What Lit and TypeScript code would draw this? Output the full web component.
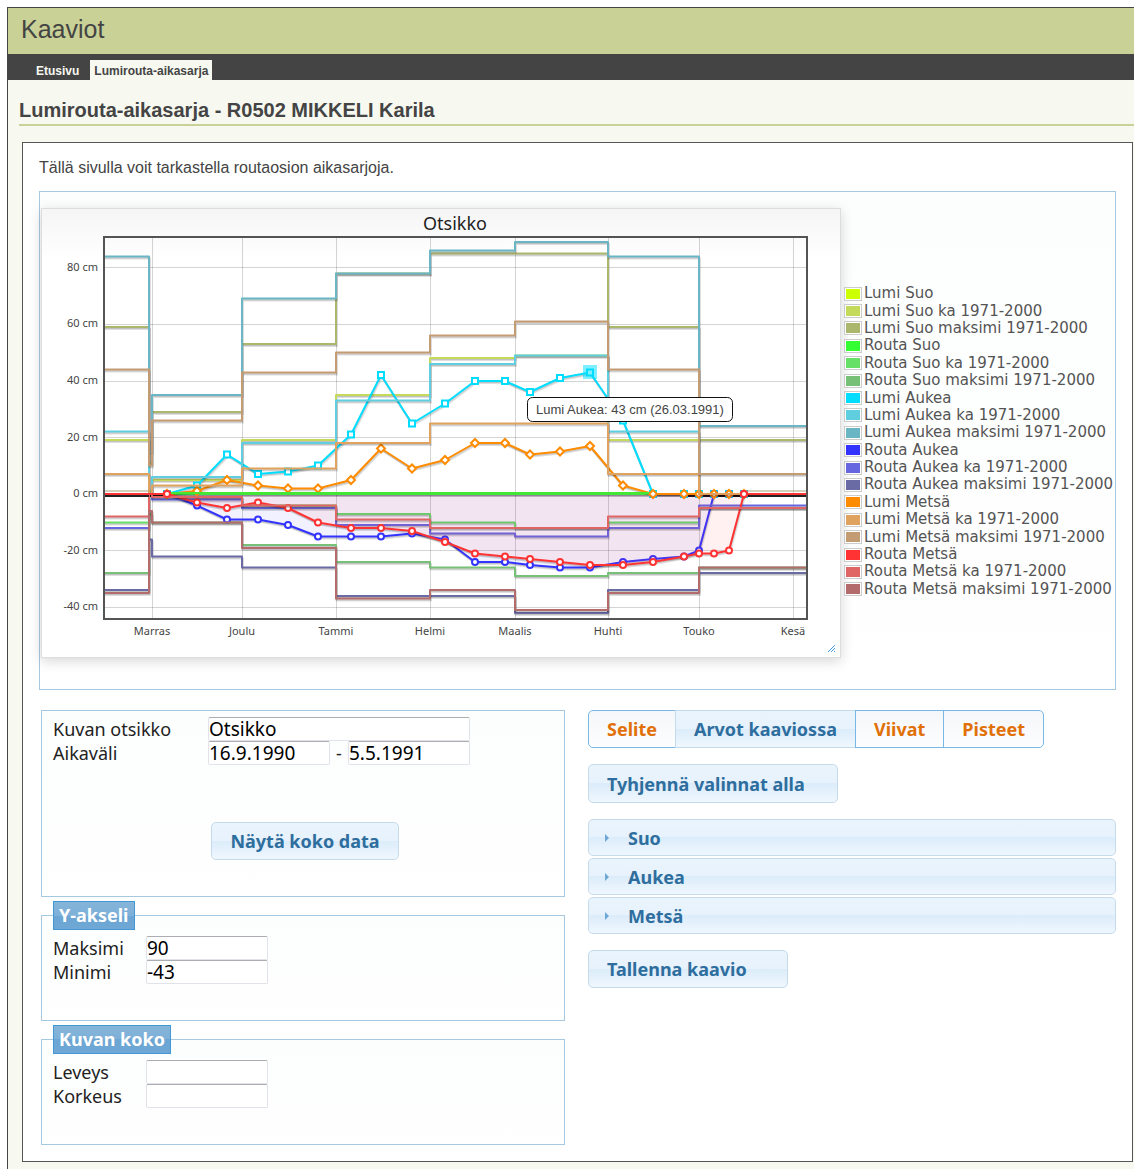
import { LitElement, html, svg, css } from "lit";
import { customElement, state } from "lit/decorators.js";

/* ---- chart geometry ---- */
const LEFT = 104;
const RIGHT = 806;
const ZERO = 494;
const BLACK_END = 698;
const cmToY = (cm: number) => Math.round((ZERO - cm * 2.83) * 2) / 2;

const MONTHS: [number, string][] = [
  [152, "Marras"], [242, "Joulu"], [336, "Tammi"], [430, "Helmi"],
  [515, "Maalis"], [608, "Huhti"], [699, "Touko"], [793, "Kesä"],
];
const TICKS = [80, 60, 40, 20, 0, -20, -40];
const STEP_X = [152, 242, 336, 430, 515, 608, 699];
const SAMPLE_X = [
  167, 197, 227, 258, 288, 318, 351, 381, 412, 445, 475,
  505, 530, 560, 590, 623, 653, 684, 699, 714, 729, 744,
];

type Shape = "square" | "diamond" | "circle";
interface Series {
  name: string;
  color: string;
  /** value before November, short gap value, then one value per month */
  steps?: number[];
  samples?: number[];
  shape?: Shape;
  area?: boolean;
  flat?: boolean;
}

const SERIES: Series[] = [
  { name: "Lumi Suo", color: "#ccff00", flat: true },
  { name: "Lumi Suo ka 1971-2000", color: "#c3da5b", steps: [19, 1, 5, 19, 35, 48, 49, 19, 0] },
  { name: "Lumi Suo maksimi 1971-2000", color: "#abb76c", steps: [59, 11, 29, 53, 78, 85, 85, 59, 19] },
  { name: "Routa Suo", color: "#33ff33", flat: true },
  { name: "Routa Suo ka 1971-2000", color: "#66e066", steps: [-10, 0, -1, -4, -7, -10, -12, -10, -5] },
  { name: "Routa Suo maksimi 1971-2000", color: "#77c077", steps: [-28, -7, -10, -18, -24, -26, -29, -28, -26] },
  {
    name: "Lumi Aukea", color: "#00ddff", shape: "square",
    samples: [0, 3, 14, 7, 8, 10, 21, 42, 25, 32, 40, 40, 36, 41, 43, 26, 0, 0, 0, 0, 0, 0],
  },
  { name: "Lumi Aukea ka 1971-2000", color: "#5fcfe0", steps: [22, 0, 6, 18, 33, 46, 49, 22, 0] },
  { name: "Lumi Aukea maksimi 1971-2000", color: "#6ab6c4", steps: [84, 15, 35, 69, 78, 86, 89, 84, 24] },
  {
    name: "Routa Aukea", color: "#3333ff", shape: "circle", area: true,
    samples: [0, -4, -9, -9, -11, -15, -15, -15, -14, -16, -24, -24, -25, -26, -26, -24, -23, -22, -20, 0, 0, 0],
  },
  { name: "Routa Aukea ka 1971-2000", color: "#6666e0", steps: [-12, 0, -2, -5, -11, -14, -15, -12, -4] },
  { name: "Routa Aukea maksimi 1971-2000", color: "#6a6aa5", steps: [-34, -16, -22, -26, -36, -36, -42, -34, -28] },
  {
    name: "Lumi Metsä", color: "#ff8c00", shape: "diamond",
    samples: [0, 1, 5, 3, 2, 2, 5, 16, 9, 12, 18, 18, 14, 15, 17, 3, 0, 0, 0, 0, 0, 0],
  },
  { name: "Lumi Metsä ka 1971-2000", color: "#dfa35f", steps: [7, 0, 3, 9, 18, 25, 25, 7, 0] },
  { name: "Lumi Metsä maksimi 1971-2000", color: "#c39c73", steps: [44, 10, 26, 43, 50, 56, 61, 44, 7] },
  {
    name: "Routa Metsä", color: "#ff3333", shape: "circle", area: true,
    samples: [0, -3, -5, -3, -5, -10, -12, -12, -13, -17, -21, -22, -23, -24, -25, -25, -24, -22, -21, -21, -20, 0],
  },
  { name: "Routa Metsä ka 1971-2000", color: "#e06666", steps: [-8, 0, -1, -4, -9, -12, -12, -8, -5] },
  { name: "Routa Metsä maksimi 1971-2000", color: "#b36b6b", steps: [-35, -6, -10, -19, -37, -34, -41, -35, -26] },
];

function pathOf(s: Series): string {
  if (s.samples) {
    return "M" + s.samples.map((v, i) => `${SAMPLE_X[i]} ${cmToY(v)}`).join("L");
  }
  if (s.steps) {
    const [before, gap, ...months] = s.steps;
    let d = `M${LEFT} ${cmToY(before)}H149V${cmToY(gap)}H152`;
    months.forEach((v, i) => {
      d += `V${cmToY(v)}H${STEP_X[i + 1] ?? RIGHT}`;
    });
    return d;
  }
  return `M${LEFT} ${ZERO}H${BLACK_END}`;
}

@customElement("frost-chart")
export class FrostChart extends LitElement {
  static styles = css`
    :host { display: block; }
    svg { display: block; width: 100%; height: auto; }
    text { font-family: "Noto Sans", sans-serif; fill: #444; }
    .title { font-size: 18px; fill: #222; text-anchor: middle; }
    .ytick { font-size: 11px; text-anchor: end; }
    .xtick { font-size: 11px; text-anchor: middle; }
    .tip { font-family: "Liberation Sans", Arial, sans-serif; font-size: 13px; fill: #444; }
    .grid { stroke: #545454; stroke-opacity: 0.25; stroke-width: 1; fill: none; shape-rendering: crispEdges; }
    .line { fill: none; stroke-width: 2; stroke-linejoin: round; }
    .shade { fill: none; stroke: #000; stroke-opacity: 0.13; stroke-width: 2; }
    .frame { fill: none; stroke: #545454; stroke-width: 2; shape-rendering: crispEdges; }
    .marker { fill: #fff; stroke-width: 2; }
    .grip { stroke: #469bdd; fill: none; stroke-width: 1; }
  `;

  private marker(s: Series, x: number, y: number) {
    if (s.shape === "square") {
      return svg`<rect class="marker" x=${x - 3} y=${y - 3} width="6" height="6" stroke=${s.color}></rect>`;
    }
    if (s.shape === "diamond") {
      return svg`<path class="marker" d=${`M${x - 4} ${y}l4 -4l4 4l-4 4z`} stroke=${s.color}></path>`;
    }
    return svg`<circle class="marker" cx=${x} cy=${y} r="3" stroke=${s.color}></circle>`;
  }

  private drawSeries(s: Series) {
    const d = pathOf(s);
    return svg`
      ${s.area ? svg`<path d=${`${d}V${ZERO}H${SAMPLE_X[0]}Z`} fill=${s.color} fill-opacity="0.07"></path>` : null}
      <path class="shade" d=${d} transform="translate(1 2)"></path>
      <path class="shade" d=${d} transform="translate(0 1)"></path>
      <path class="line" d=${d} stroke=${s.color}></path>
      ${s.samples?.map((v, i) => this.marker(s, SAMPLE_X[i], cmToY(v)))}
    `;
  }

  render() {
    return html`
      <svg viewBox="42 209 798 448" role="img" aria-label="Otsikko">
        <text class="title" x="455" y="230">Otsikko</text>
        ${TICKS.map((t) => svg`
          <path class="grid" d=${`M105 ${cmToY(t)}H806`}></path>
          <text class="ytick" x="98" y=${Math.round(cmToY(t)) + 3}>${t} cm</text>`)}
        ${MONTHS.map(([x, label]) => svg`
          <path class="grid" d=${`M${x} 238V618`}></path>
          <text class="xtick" x=${x} y="635">${label}</text>`)}
        <path d="M105 496H167M684 496H806" stroke="#222" stroke-width="2"></path>
        ${SERIES.map((s) => this.drawSeries(s))}
        <path d="M105 494H167M744 494H806" stroke="#f33" stroke-width="2"></path>
        <path d="M105 491H149M744 491H806" stroke="#a9a078" stroke-width="1"></path>
        <path d="M105 496H149M749 496H806" stroke="#222" stroke-width="2"></path>
        <path d="M171 493H649" stroke="#44e833" stroke-width="2"></path>
        <circle class="marker" cx="167" cy="494" r="3" stroke="#ff3333"></circle>
        <circle class="marker" cx="744" cy="494" r="3" stroke="#ff3333"></circle>
        <rect x="583" y="365" width="14" height="14" fill="#00ddff" fill-opacity="0.5"></rect>
        <rect class="frame" x="104" y="237" width="703" height="382"></rect>
        <rect x="527.5" y="397.5" width="205" height="24" rx="5" fill="#fff" stroke="#111"></rect>
        <text class="tip" x="536" y="414">Lumi Aukea: 43 cm (26.03.1991)</text>
        <path class="grip" d="M828 652l7 -7M831 652l4 -4M834 652l1 -1"></path>
      </svg>
    `;
  }
}

@customElement("app-root")
export class AppRoot extends LitElement {
  static styles = css`
    :host {
      display: block;
      background: #fff;
      color: #444;
      font-family: "Liberation Sans", Arial, sans-serif;
      --line: #a6c9e2;
    }
    * { box-sizing: border-box; }
    .page {
      margin: 7px 0 0 7px;
      padding-bottom: 7px;
      border-top: 1px solid #444;
      border-left: 1px solid #444;
      background: #f7f8f0;
    }
    header { background: #c9d197; height: 46px; padding-left: 13px; }
    h1 { margin: 0; font-size: 25px; line-height: 42px; font-weight: 400; }
    nav {
      display: flex;
      align-items: flex-end;
      gap: 7px;
      height: 26px;
      padding-left: 24px;
      background: #444;
      font-size: 12px;
      font-weight: 700;
      line-height: 18px;
    }
    nav a { padding: 2px 4px 0; color: #f7f8f0; text-decoration: none; }
    nav a.current { background: #f7f8f0; color: #444; }
    h2 {
      margin: 18px 0 16px 11px;
      padding-bottom: 2px;
      border-bottom: 2px solid #c9d197;
      font-size: 20px;
      line-height: 24px;
    }
    main {
      margin: 0 1px 0 14px;
      padding: 16px;
      border: 1px solid #555;
      background: #fff;
    }
    .intro { margin: 0 0 14px; font-size: 16px; line-height: 18px; }
    .widget {
      font-family: "Noto Sans", sans-serif;
      color: #222;
      border: 1px solid var(--line);
      background: linear-gradient(#fcfefe, #fefefe 75%, #fff);
    }
    .chart-box { display: flex; align-items: center; }
    .panel {
      flex: 1;
      min-width: 0;
      margin: 16px 3px 31px 1px;
      border: 1px solid #ddd;
      background: linear-gradient(#f5f5f5, #fff 50px);
      box-shadow: 0 3px 12px rgba(0, 0, 0, 0.16);
    }
    .legend {
      flex: 0 0 271px;
      display: grid;
      grid-auto-rows: 1fr;
      height: 315px;
      margin: 0;
      padding: 2px 0 0;
      list-style: none;
      font-family: "DejaVu Sans", sans-serif;
      font-size: 15px;
      line-height: 17px;
      color: #545454;
      white-space: nowrap;
    }
    .legend li { display: flex; align-items: center; gap: 2px; }
    .swatch { width: 18px; height: 14px; padding: 1px; border: 1px solid #ccc; background: #fff; }
    .swatch i { display: block; height: 100%; }
    .columns {
      display: grid;
      grid-template-columns: minmax(0, 524fr) minmax(0, 528fr);
      gap: 23px;
      margin: 20px 0 0 2px;
      font-family: "Noto Sans", sans-serif;
      font-size: 18px;
      color: #222;
    }
    .forms { display: flex; flex-direction: column; gap: 4px; }
    fieldset { margin: 0; padding: 6px 11px 0; min-width: 0; min-height: 120px; }
    fieldset.main-set { display: flex; flex-direction: column; min-height: 187px; }
    legend {
      padding: 0 5px;
      border: 1px solid #4297d7;
      background: linear-gradient(#86b4d9, #7db0d8 50%, #6ba5d3 50%, #6fa8d5);
      color: #fff;
      font-weight: 700;
      line-height: 27px;
    }
    .row { display: grid; grid-template-columns: 93px 122px; align-items: center; height: 24px; }
    .main-set .row { grid-template-columns: 155px 262px; }
    .range { display: flex; justify-content: space-between; }
    .range input { width: 122px; }
    input {
      width: 100%;
      min-width: 0;
      height: 24px;
      padding: 0;
      border: 1px solid #e2e3ea;
      border-top-color: #abadb3;
      border-radius: 2px;
      background: #fff;
      color: #000;
      font: 19px/22px "Noto Sans", sans-serif;
    }
    button {
      display: inline-flex;
      align-items: center;
      height: 38px;
      margin: 0;
      padding: 0 18px;
      border: 1px solid #c5dbec;
      border-radius: 5px;
      background: linear-gradient(#e9f4fd, #e7f2fc 50%, #dcecfa 50%, #eff7fe);
      color: #2e6e9e;
      font: 700 18px/24px "Noto Sans", sans-serif;
    }
    .center { align-self: center; margin: 57px 0 0 4px; }
    .tools { display: flex; flex-direction: column; align-items: flex-start; gap: 16px; }
    .tabs { display: flex; }
    .tabs button { border-radius: 0; margin-right: -1px; }
    .tabs button:first-child { border-radius: 5px 0 0 5px; }
    .tabs button:last-child { border-radius: 0 5px 5px 0; margin-right: 0; }
    .tabs button.on {
      border-color: #79b7e7;
      background: linear-gradient(#f4f7f9, #fcfdfe);
      color: #e17009;
    }
    .clear { width: 250px; height: 39px; }
    .save { width: 200px; }
    .accordion { display: flex; flex-direction: column; gap: 2px; width: 100%; }
    .accordion button { height: 37px; gap: 18px; padding: 0 15px; }
    .arrow { width: 6px; height: 8px; }
  `;

  @state() private enabled = new Set(["Selite", "Viivat", "Pisteet"]);

  private toggle(name: string) {
    const next = new Set(this.enabled);
    if (!next.delete(name)) next.add(name);
    this.enabled = next;
  }

  private row(id: string, label: string, value = "") {
    return html`<div class="row">
      <label for=${id}>${label}</label>
      <input id=${id} type="text" .value=${value} />
    </div>`;
  }

  render() {
    return html`
      <div class="page">
        <header><h1>Kaaviot</h1></header>
        <nav>
          <a href="#etusivu">Etusivu</a>
          <a class="current" href="#lumirouta">Lumirouta-aikasarja</a>
        </nav>
        <h2>Lumirouta-aikasarja - R0502 MIKKELI Karila</h2>
        <main>
          <p class="intro">Tällä sivulla voit tarkastella routaosion aikasarjoja.</p>
          <section class="widget chart-box">
            <div class="panel"><frost-chart></frost-chart></div>
            <ul class="legend">
              ${SERIES.map((s) => html`<li>
                <span class="swatch"><i style="background:${s.color}"></i></span>
                <span>${s.name}</span>
              </li>`)}
            </ul>
          </section>
          <div class="columns">
            <form class="forms">
              <fieldset class="widget main-set">
                ${this.row("title", "Kuvan otsikko", "Otsikko")}
                <div class="row">
                  <label for="from">Aikaväli</label>
                  <div class="range">
                    <input id="from" type="text" .value=${"16.9.1990"} />
                    <label for="to">-</label>
                    <input id="to" type="text" .value=${"5.5.1991"} />
                  </div>
                </div>
                <button class="center" type="button">Näytä koko data</button>
              </fieldset>
              <fieldset class="widget">
                <legend>Y-akseli</legend>
                ${this.row("max", "Maksimi", "90")} ${this.row("min", "Minimi", "-43")}
              </fieldset>
              <fieldset class="widget">
                <legend>Kuvan koko</legend>
                ${this.row("width", "Leveys")} ${this.row("height", "Korkeus")}
              </fieldset>
            </form>
            <div class="tools">
              <div class="tabs">
                ${["Selite", "Arvot kaaviossa", "Viivat", "Pisteet"].map((t) => html`<button
                  type="button"
                  class=${this.enabled.has(t) ? "on" : ""}
                  aria-pressed=${this.enabled.has(t)}
                  @click=${() => this.toggle(t)}
                >${t}</button>`)}
              </div>
              <button class="clear" type="button">Tyhjennä valinnat alla</button>
              <div class="accordion">
                ${["Suo", "Aukea", "Metsä"].map((t) => html`<button type="button" aria-expanded="false">
                  <svg class="arrow" viewBox="0 0 6 8" aria-hidden="true"><path d="M1 0L5 4L1 8Z" fill="#6da8d5"></path></svg>
                  <span>${t}</span>
                </button>`)}
              </div>
              <button class="save" type="button">Tallenna kaavio</button>
            </div>
          </div>
        </main>
      </div>
    `;
  }
}
